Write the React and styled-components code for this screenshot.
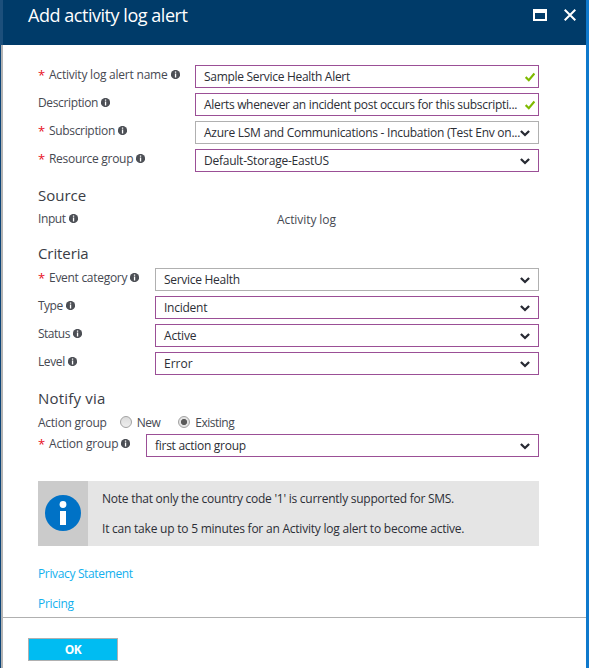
import React from "react";
import styled, { createGlobalStyle } from "styled-components";

const Global = createGlobalStyle`
  * { box-sizing: border-box; }
  body { margin: 0; background: #fff; }
`;

const Blade = styled.div`
  width: 589px;
  height: 668px;
  display: flex;
  flex-direction: column;
  overflow: hidden;
  background: #fff;
  border-right: 3px solid #0f79cc;
  font-family: "Open Sans", "Noto Sans", sans-serif;
  font-size: 12px;
  color: #464952;
`;

const Header = styled.header`
  flex: none;
  height: 45px;
  display: flex;
  align-items: flex-start;
  background: #003b69;
  border-left: 3px solid #1c4f7b;
  padding-right: 10px;
`;

const Title = styled.h1`
  margin: 4px auto 0 25px;
  font-size: 18px;
  line-height: 23px;
  font-weight: 400;
  color: #fff;
  white-space: nowrap;
  letter-spacing: -0.46px;
`;

const HeaderButton = styled.button`
  display: flex;
  margin: 8px 0 0 ${(p) => p.$gap || 0}px;
  padding: 0;
  border: 0;
  background: none;
`;

const Main = styled.main`
  flex: 1;
  display: flex;
  flex-direction: column;
  border-left: 1px solid #0b4478;
  box-shadow: inset 2px 0 #b3b3b3;
`;

const Form = styled.div`
  height: 572px;
  padding: 20px 47px 0 37px;
`;

const Row = styled.div`
  display: flex;
  height: 23px;
  margin-bottom: 5px;
`;

const Label = styled.label`
  width: ${(p) => p.$w}px;
  flex: none;
  display: flex;
  align-items: center;
  height: 20px;
  line-height: 20px;
  white-space: nowrap;
`;

const Required = styled.span`
  width: 11px;
  color: #e81123;
  font-size: 13px;
  font-weight: 500;
`;

const Text = styled.span`
  white-space: nowrap;
  letter-spacing: ${(p) => p.$ls || 0}px;
`;

const InfoDot = styled.svg`
  margin: 0 0 2px 3px;
  flex: none;
`;

const Field = styled.div`
  flex: 1;
  min-width: 0;
  display: flex;
  align-items: center;
  justify-content: space-between;
  height: 23px;
  padding: 0 ${(p) => (p.$check ? 3 : 8)}px 0 8px;
  border: 1px solid ${(p) => (p.$plain ? "#b0b0b0" : "#9b4f96")};
  background: #fff;
  color: #2c2e36;

  svg {
    flex: none;
  }
`;

const Section = styled.h2`
  margin: ${(p) => p.$top}px 0 ${(p) => p.$bottom || 0}px;
  height: 24px;
  line-height: 24px;
  font-size: 15px;
  font-weight: 400;
  color: #3a3d46;
  letter-spacing: ${(p) => p.$ls || 0}px;
`;

const Plain = styled.div`
  display: flex;
  align-items: center;
  height: 20px;
  margin-bottom: ${(p) => p.$bottom || 0}px;
`;

const Radio = styled.span`
  width: 12px;
  height: 12px;
  margin: 0 5px 0 ${(p) => p.$gap}px;
  border-radius: 50%;
  border: 1px solid #a2a2a2;
  background: ${(p) => (p.$on ? "radial-gradient(circle, #5a5a5a 0 2.7px, #e3e3e3 3.5px)" : "linear-gradient(#dcdcdc, #eee)")};
`;

const Notice = styled.section`
  display: flex;
  height: 65px;
  margin-top: 24px;
  background: #e5e5e5;
`;

const NoticeIcon = styled.div`
  width: 50px;
  display: flex;
  align-items: center;
  justify-content: center;
  padding-bottom: 1px;
  background: #cbcbcb;
`;

const NoticeText = styled.div`
  padding: 3px 0 0 14px;
  line-height: 30px;
  display: flex;
  flex-direction: column;
  color: #2c2e36;
`;

const Links = styled.nav`
  display: flex;
  flex-direction: column;
  align-items: flex-start;
  margin-top: 13px;
  line-height: 30px;
  color: #13b0ee;
`;

const Footer = styled.footer`
  margin-left: 2px;
  border-top: 1px solid #b0b0b0;
  padding: 20px 0 0 25px;
`;

const OkButton = styled.button`
  display: block;
  width: 90px;
  height: 23px;
  padding: 0;
  border: 1px solid #b0b0b0;
  background: #00bcf2;
  color: #fff;
  font: 700 12px/20px "Open Sans", sans-serif;
  letter-spacing: -0.4px;
`;

const Info = () => (
  <InfoDot width="9" height="9" viewBox="0 0 9 9">
    <circle cx="4.5" cy="4.5" r="4.6" fill="#4c4f55" />
    <path d="M3.9 1.4h1.3v1.3H3.9zM3.9 3.6h1.3v3.8H3.9z" fill="#fff" />
  </InfoDot>
);

const Chevron = () => (
  <svg width="10" height="8" viewBox="0 0 10 8">
    <path d="M.9 2 5 6 9.1 2" fill="none" stroke="#272a33" strokeWidth="2.3" />
  </svg>
);

const Check = () => (
  <svg width="10" height="10" viewBox="0 0 10 10">
    <path d="M.7 5.1 3.8 8.2 9.4 1.5" fill="none" stroke="#7fba00" strokeWidth="2.1" />
  </svg>
);

function FormRow({ label, ls, w, required, value, vls, plain, check }) {
  return (
    <Row>
      <Label $w={w}>
        {required && <Required>*</Required>}
        <Text $ls={ls}>{label}</Text>
        <Info />
      </Label>
      <Field $plain={plain} $check={check}>
        <Text $ls={vls}>{value}</Text>
        {check ? <Check /> : <Chevron />}
      </Field>
    </Row>
  );
}

export default function App() {
  return (
    <>
      <Global />
      <Blade>
        <Header>
          <Title>Add activity log alert</Title>
          <HeaderButton aria-label="Maximize">
            <svg width="14" height="14" viewBox="0 0 14 14">
              <path d="M0 1h14v12H0zM2 5v6h10V5z" fill="#fff" fillRule="evenodd" />
            </svg>
          </HeaderButton>
          <HeaderButton $gap={17} aria-label="Close">
            <svg width="12" height="14" viewBox="0 0 12 14">
              <path d="M.7 1.7 11.3 12.3M11.3 1.7.7 12.3" stroke="#fff" strokeWidth="2" />
            </svg>
          </HeaderButton>
        </Header>
        <Main>
          <Form>
            <FormRow w={157} required label="Activity log alert name" ls={-0.22} value="Sample Service Health Alert" vls={-0.3} check />
            <FormRow w={157} label="Description" ls={-0.36} value="Alerts whenever an incident post occurs for this subscripti..." vls={-0.32} check />
            <FormRow w={157} required label="Subscription" ls={-0.33} value="Azure LSM and Communications - Incubation (Test Env on..." vls={-0.27} plain />
            <FormRow w={157} required label="Resource group" ls={-0.29} value="Default-Storage-EastUS" vls={-0.24} />
            <Section $top={11} $bottom={2}>Source</Section>
            <Plain>
              <Label $w={239}><Text $ls={-0.4}>Input</Text><Info /></Label>
              <Text $ls={-0.08}>Activity log</Text>
            </Plain>
            <Section $top={12} $bottom={3} $ls={-0.1}>Criteria</Section>
            <div>
              <FormRow w={117} required label="Event category" ls={-0.29} value="Service Health" vls={-0.29} plain />
              <FormRow w={117} label="Type" ls={-0.5} value="Incident" vls={-0.25} />
              <FormRow w={117} label="Status" ls={-0.5} value="Active" vls={-0.17} />
              <FormRow w={117} label="Level" ls={-0.4} value="Error" />
            </div>
            <Section $top={11} $bottom={2} $ls={0.2}>Notify via</Section>
            <Plain $bottom={2}>
              <Text $ls={-0.25}>Action group</Text>
              <Radio $gap={13} /><Text $ls={-0.5}>New</Text>
              <Radio $gap={18} $on /><Text $ls={-0.5}>Existing</Text>
            </Plain>
            <FormRow w={108} required label="Action group" ls={-0.2} value="first action group" vls={-0.28} />
            <Notice>
              <NoticeIcon>
                <svg width="36" height="36" viewBox="0 0 36 36">
                  <circle cx="18" cy="18" r="18" fill="#0072c6" />
                  <circle cx="18" cy="9.5" r="3.4" fill="#fff" />
                  <path d="M15 16h6v14h-6z" fill="#fff" />
                </svg>
              </NoticeIcon>
              <NoticeText>
                <Text $ls={-0.25}>Note that only the country code '1' is currently supported for SMS.</Text>
                <Text $ls={-0.225}>It can take up to 5 minutes for an Activity log alert to become active.</Text>
              </NoticeText>
            </Notice>
            <Links>
              <Text as="a" $ls={-0.35}>Privacy Statement</Text>
              <Text as="a" $ls={-0.29}>Pricing</Text>
            </Links>
          </Form>
          <Footer><OkButton>OK</OkButton></Footer>
        </Main>
      </Blade>
    </>
  );
}
